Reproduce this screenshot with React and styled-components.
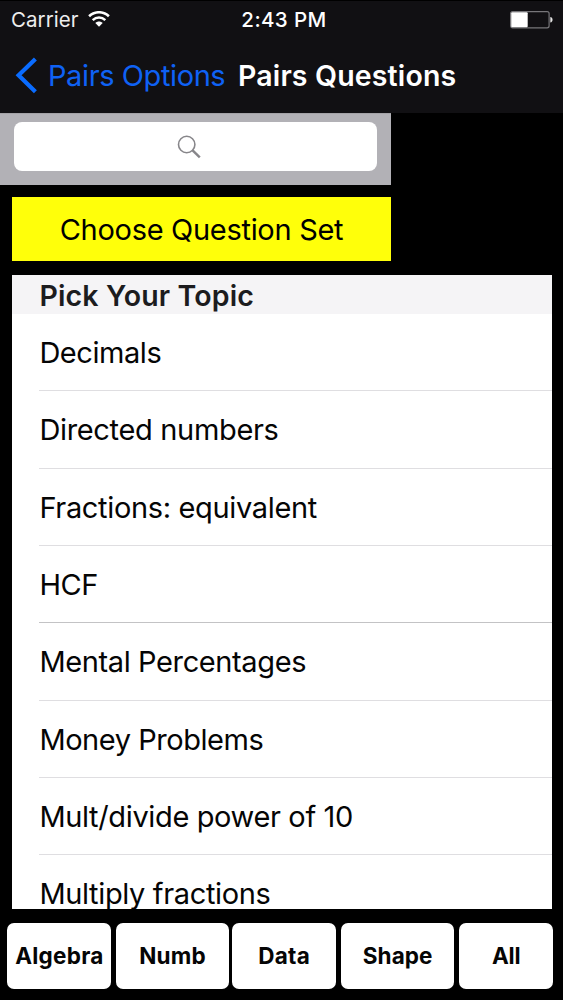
import React from "react";
import styled, { createGlobalStyle } from "styled-components";

const GlobalStyle = createGlobalStyle`
  * { box-sizing: border-box; }
  body {
    margin: 0;
    background: #000;
    font-family: Inter, "Liberation Sans", sans-serif;
  }
`;

const Screen = styled.div`
  width: 563px;
  height: 1000px;
  display: flex;
  flex-direction: column;
  overflow: hidden;
  background: #000;
`;

const Header = styled.header`
  height: 113px;
  flex: none;
  background: #111013;
  border-top: 1px solid #000;
`;

const StatusBar = styled.div`
  height: 37px;
  display: grid;
  grid-template-columns: 1fr auto 1fr;
  align-items: center;
  padding: 0 10px 0 11px;
  color: #fff;
  font-size: 20.5px;
  line-height: 37px;
`;

const Carrier = styled.div`
  display: flex;
  align-items: center;
  gap: 9px;
  color: #eee;
  letter-spacing: 0.05px;
`;

const Clock = styled.div`
  font-weight: 500;
  letter-spacing: 0.4px;
  padding-left: 4px;
`;

const BatterySlot = styled.div`
  display: flex;
  justify-content: flex-end;
`;

const NavBar = styled.nav`
  height: 75px;
  display: flex;
  align-items: center;
  padding-left: 15px;
  line-height: 75px;
  font-size: 29px;
`;

const BackLink = styled.a`
  display: flex;
  align-items: center;
  gap: 10px;
  width: 223px;
  color: #0f62f5;
  white-space: nowrap;
  letter-spacing: -0.4px;
`;

const Title = styled.h1`
  margin: 0;
  font-size: 28.5px;
  font-weight: 600;
  color: #fff;
  white-space: nowrap;
  letter-spacing: 0.15px;
`;

const SearchBar = styled.div`
  width: 391px;
  height: 72px;
  flex: none;
  padding: 8px 14px 14px;
  background: #b2b1b6;
  border-top: 1px solid #a3a2a6;
`;

const SearchField = styled.div`
  height: 49px;
  display: flex;
  align-items: center;
  justify-content: center;
  padding-right: 14px;
  background: #fff;
  border-radius: 8px;
`;

const ChooseButton = styled.button`
  width: 379px;
  height: 64px;
  flex: none;
  margin: 12px 0 0 12px;
  padding: 1px 0 0;
  border: 0;
  background: #ffff0a;
  color: #000;
  font-family: inherit;
  font-size: 29px;
  letter-spacing: -0.3px;
`;

const TopicList = styled.section`
  width: 540px;
  height: 634px;
  flex: none;
  margin: 14px 0 0 12.4px;
  background: #fff;
  overflow: hidden;
`;

const ListHeader = styled.h2`
  margin: 0;
  height: 39px;
  padding-left: 27px;
  background: #f5f4f6;
  color: #1c1c1e;
  font-size: 28.5px;
  font-weight: 600;
  line-height: 42px;
  letter-spacing: 0.15px;
`;

const TopicRow = styled.div`
  height: 77.33px;
  margin-left: 27px;
  border-bottom: 1px solid ${(p) => (p.$strong ? "#c3c3c5" : "#dfdee1")};
  color: #050505;
  font-size: 29px;
  line-height: 78px;
  white-space: nowrap;
  letter-spacing: ${(p) => p.$tracking}px;
`;

const Tabs = styled.footer`
  display: flex;
  height: 66px;
  margin: 14px 0 0 7.4px;
`;

const Tab = styled.button`
  flex: none;
  width: ${(p) => p.$width}px;
  margin-right: ${(p) => p.$gap}px;
  padding: 0 0 1px;
  border: 0;
  border-radius: 7px;
  background: #fff;
  color: #050505;
  font-family: inherit;
  font-size: 22.5px;
  font-weight: 700;
  letter-spacing: ${(p) => p.$tracking}px;
`;

const WifiIcon = () => (
  <svg width="22" height="17" viewBox="0 0 22 17" fill="none" stroke="#fff" strokeWidth="2.6">
    <path d="M1.1 5.3C6.8 -.1 15.2 -.1 20.9 5.3" />
    <path d="M4.7 9.1C8.4 5.7 13.6 5.7 17.3 9.1" />
    <path d="M7.3 12C9.5 10 12.5 10 14.7 12L11 15.7Z" fill="#fff" stroke="none" />
  </svg>
);

const BatteryIcon = () => (
  <svg width="43" height="18" viewBox="0 0 43 18">
    <rect x=".6" y=".6" width="38.5" height="16.2" rx="2" fill="none" stroke="#77767a" strokeWidth="1.2" />
    <rect x="1.2" y="1.2" width="16.5" height="15" rx="1" fill="#fff" />
    <path d="M40.3 6C43.3 6.4 43.3 11.2 40.3 11.6Z" fill="#e4e4e4" />
  </svg>
);

const BackIcon = () => (
  <svg width="23" height="37" viewBox="0 0 23 37" fill="none" stroke="#0a6cff" strokeWidth="4.2">
    <path d="M20.4 2L3.6 18.3L20.4 34.8" />
  </svg>
);

const SearchIcon = () => (
  <svg width="24" height="24" viewBox="0 0 24 24" fill="none" stroke="#87868a">
    <circle cx="9.7" cy="9.5" r="8.2" strokeWidth="1.6" />
    <path d="M15.6 15.3L22.8 22.4" strokeWidth="2.4" />
  </svg>
);

const topics = [
  { name: "Decimals", tracking: -0.45 },
  { name: "Directed numbers", tracking: -0.33 },
  { name: "Fractions: equivalent", tracking: -0.34 },
  { name: "HCF", tracking: -0.5, strong: true },
  { name: "Mental Percentages", tracking: -0.38 },
  { name: "Money Problems", tracking: -0.45 },
  { name: "Mult/divide power of 10", tracking: -0.36 },
  { name: "Multiply fractions", tracking: -0.36 },
];

const tabs = [
  { name: "Algebra", width: 104, gap: 4.6, tracking: 0.25 },
  { name: "Numb", width: 113, gap: 3.2, tracking: 0.2 },
  { name: "Data", width: 104, gap: 5, tracking: 0.3 },
  { name: "Shape", width: 113, gap: 5, tracking: 0.1 },
  { name: "All", width: 94, gap: 0, tracking: -0.2 },
];

export default function App() {
  return (
    <>
      <GlobalStyle />
      <Screen>
        <Header>
          <StatusBar>
            <Carrier>
              Carrier
              <WifiIcon />
            </Carrier>
            <Clock>2:43 PM</Clock>
            <BatterySlot>
              <BatteryIcon />
            </BatterySlot>
          </StatusBar>
          <NavBar>
            <BackLink>
              <BackIcon />
              Pairs Options
            </BackLink>
            <Title>Pairs Questions</Title>
          </NavBar>
        </Header>
        <SearchBar>
          <SearchField>
            <SearchIcon />
          </SearchField>
        </SearchBar>
        <ChooseButton>Choose Question Set</ChooseButton>
        <TopicList>
          <ListHeader>Pick Your Topic</ListHeader>
          {topics.map((t) => (
            <TopicRow key={t.name} $tracking={t.tracking} $strong={t.strong}>
              {t.name}
            </TopicRow>
          ))}
        </TopicList>
        <Tabs>
          {tabs.map((t) => (
            <Tab key={t.name} $width={t.width} $gap={t.gap} $tracking={t.tracking}>
              {t.name}
            </Tab>
          ))}
        </Tabs>
      </Screen>
    </>
  );
}
